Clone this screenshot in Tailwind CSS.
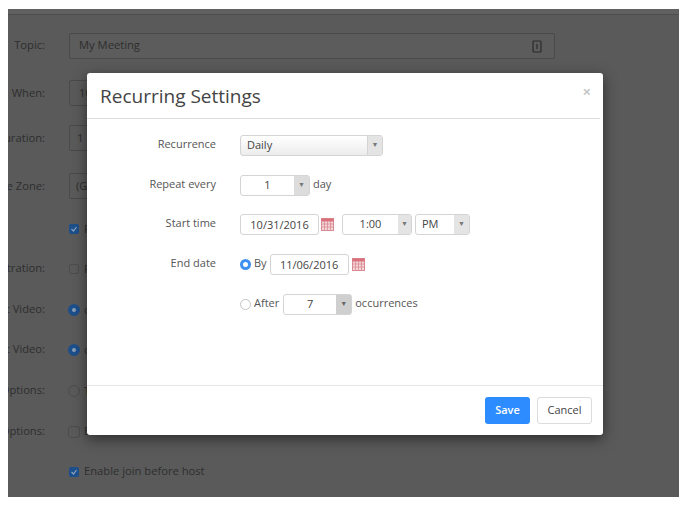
<!DOCTYPE html>
<html lang="en">
  <head>
    <meta charset="UTF-8" />
    <title>Recurring Settings</title>
    <script src="https://cdn.jsdelivr.net/npm/@tailwindcss/browser@4"></script>
  </head>
  <body class="bg-white w-[685px] h-[508px] overflow-hidden font-['Open_Sans',sans-serif] relative">
    <!-- Dimmed page behind the dialog -->
    <div class="ml-2 mt-[9px] w-[671px] h-[488px] bg-[#5a5a5a] overflow-hidden text-[#2e2e2e] text-[11.2px]">
      <div class="h-1.5 border-b border-[#4e4e4e] bg-[#606060]"></div>
      <div class="mt-[18px] flex flex-col">
        <div class="h-[26px] flex items-center">
          <div class="w-[37px] flex justify-end whitespace-nowrap -mt-0.5">Topic:</div>
          <div class="ml-6 w-[486px] h-[26px] border border-[#4a4a4a] rounded-[2px] bg-[#5c5c5c] flex items-center justify-between pl-[9px] pr-3">
            <span class="-mt-0.5">My Meeting</span>
            <svg width="10" height="13" viewBox="0 0 10 13" fill="none" stroke="#2b2b2b" stroke-width="1.2"><rect x="1" y="1" width="8" height="11" rx="1"/><path d="M5 4v5"/></svg>
          </div>
        </div>
        <div class="mt-[21px] h-[26px] flex items-center">
          <div class="w-[37px] flex justify-end whitespace-nowrap">When:</div>
          <div class="ml-6 w-20 h-[26px] border border-[#4a4a4a] rounded-[2px] pl-[9px] leading-6">10/31/2016</div>
        </div>
        <div class="mt-[19px] h-[26px] flex items-center">
          <div class="w-[37px] flex justify-end whitespace-nowrap">Duration:</div>
          <div class="ml-6 w-20 h-[26px] border border-[#4a4a4a] rounded-[2px] pl-[7px] leading-6">1</div>
        </div>
        <div class="mt-[22px] h-[26px] flex items-center">
          <div class="w-[37px] flex justify-end whitespace-nowrap">Time Zone:</div>
          <div class="ml-6 w-20 h-[26px] border border-[#4a4a4a] rounded-[2px] pl-[6px] leading-6 whitespace-nowrap overflow-hidden">(GMT-7:00)</div>
        </div>
        <div class="mt-[21px] h-[18px] flex items-center">
          <div class="ml-[61px] w-2.5 h-2.5 rounded-[2px] bg-[#1d4f8a] flex items-center justify-center">
            <svg width="8" height="8" viewBox="0 0 8 8" fill="none" stroke="#8ca3bf" stroke-width="1.2"><path d="M1.5 4l2 2 3-4"/></svg>
          </div>
          <span class="ml-[5px]">Recurring</span>
        </div>
        <div class="mt-[22px] h-[18px] flex items-center">
          <div class="w-[37px] flex justify-end whitespace-nowrap -mt-0.5">Registration:</div>
          <div class="ml-6 w-2.5 h-2.5 rounded-[2px] border border-[#4c4c4c]"></div>
          <span class="ml-[5px]">Required</span>
        </div>
        <div class="mt-[23px] h-[18px] flex items-center">
          <div class="w-[37px] flex justify-end whitespace-nowrap -mt-0.5">Host Video:</div>
          <div class="ml-[23px] w-3 h-3 rounded-full border-4 border-[#1d4f8a] bg-[#8a9db5]"></div>
          <span class="ml-1">on</span>
        </div>
        <div class="mt-[22px] h-[18px] flex items-center">
          <div class="w-[37px] flex justify-end whitespace-nowrap -mt-0.5">Guest Video:</div>
          <div class="ml-[23px] w-3 h-3 rounded-full border-4 border-[#1d4f8a] bg-[#8a9db5]"></div>
          <span class="ml-1">on</span>
        </div>
        <div class="mt-[23px] h-[18px] flex items-center">
          <div class="w-[37px] flex justify-end whitespace-nowrap -mt-0.5">Audio Options:</div>
          <div class="ml-[23px] w-3 h-3 rounded-full border border-[#4c4c4c]"></div>
          <span class="ml-1">Telephone</span>
        </div>
        <div class="mt-[23px] h-[18px] flex items-center">
          <div class="w-[37px] flex justify-end whitespace-nowrap -mt-0.5">Meeting Options:</div>
          <div class="ml-[23px] w-3 h-3 rounded-[3px] border border-[#4c4c4c]"></div>
          <span class="ml-1 -mt-0.5">Enable</span>
        </div>
        <div class="mt-[22px] h-[18px] flex items-center">
          <div class="ml-[61px] w-2.5 h-2.5 rounded-[2px] bg-[#1d4f8a] flex items-center justify-center">
            <svg width="8" height="8" viewBox="0 0 8 8" fill="none" stroke="#8ca3bf" stroke-width="1.2"><path d="M1.5 4l2 2 3-4"/></svg>
          </div>
          <span class="ml-[5px] -mt-0.5">Enable join before host</span>
        </div>
      </div>
    </div>

    <!-- Dialog -->
    <div class="absolute left-[87px] top-[73px] w-[516px] h-[362px] bg-white rounded-[3px] shadow-[0_4px_14px_rgba(0,0,0,0.5)] flex flex-col text-[#555] text-[11px]">
      <div class="h-[46px] flex justify-between border-b border-[#dedede] mr-[3px] pl-[13px] pr-[9px]">
        <h2 class="text-[19px] leading-[46px] text-[#444]">Recurring Settings</h2>
        <span class="text-[15px] leading-[36px] font-bold text-[#c8c8c8]">×</span>
      </div>
      <div class="flex-1 pt-4 flex flex-col">
        <div class="flex items-center h-[21px]">
          <div class="w-[129px] text-right -mt-0.5">Recurrence</div>
          <div class="ml-6 w-[143px] h-[21px] border border-[#d4d4d4] rounded-[3px] flex justify-between items-center pl-1.5 bg-gradient-to-b from-white to-[#ececec]">
            <span class="text-[#444]">Daily</span>
            <span class="w-[15px] h-full bg-[#e4e4e4] border-l border-[#d4d4d4] text-[#777] text-[7px] flex items-center justify-center">▼</span>
          </div>
        </div>
        <div class="flex items-center h-[21px] mt-[19px]">
          <div class="w-[129px] text-right -mt-0.5">Repeat every</div>
          <div class="ml-6 w-[70px] h-[21px] border border-[#d4d4d4] rounded-[3px] flex justify-between items-center">
            <span class="flex-1 text-center text-[#444]">1</span>
            <span class="w-[15px] h-full bg-[#dcdcdc] text-[#777] text-[7px] flex items-center justify-center">▼</span>
          </div>
          <span class="ml-[3px] -mt-0.5">day</span>
        </div>
        <div class="flex items-center h-[21px] mt-[18px]">
          <div class="w-[129px] text-right -mt-0.5">Start time</div>
          <div class="ml-6 w-[79px] h-[21px] border border-[#d4d4d4] rounded-[3px] text-center text-[#444] leading-[19px]">10/31/2016</div>
          <svg class="ml-0.5" width="13" height="13" viewBox="0 0 13 13"><rect x="0.5" y="0.5" width="12" height="12" fill="#f3d5d8" stroke="#d98a92"/><rect x="0.5" y="0.5" width="12" height="3" fill="#d9707c"/><path d="M0 6h13M0 9h13M3.5 3v10M6.5 3v10M9.5 3v10" stroke="#d98a92" stroke-width="0.8"/></svg>
          <div class="ml-2 w-[70px] h-[21px] border border-[#d4d4d4] rounded-[3px] flex justify-between items-center">
            <span class="flex-1 text-center text-[#444]">1:00</span>
            <span class="w-[13px] h-full bg-[#e4e4e4] text-[#777] text-[7px] flex items-center justify-center">▼</span>
          </div>
          <div class="ml-[3px] w-[55px] h-[21px] border border-[#d4d4d4] rounded-[3px] flex justify-between items-center pl-1.5">
            <span class="text-[#444]">PM</span>
            <span class="w-[15px] h-full bg-[#e4e4e4] text-[#777] text-[7px] flex items-center justify-center">▼</span>
          </div>
        </div>
        <div class="flex items-center h-[21px] mt-[19px]">
          <div class="w-[129px] text-right -mt-0.5">End date</div>
          <div class="ml-6 w-[11px] h-[11px] rounded-full border-[3.5px] border-[#3d8ff0] bg-white shrink-0"></div>
          <span class="ml-[3px] -mt-0.5">By</span>
          <div class="ml-[3px] w-[79px] h-[21px] border border-[#d4d4d4] rounded-[3px] text-center text-[#444] leading-[19px]">11/06/2016</div>
          <svg class="ml-[3px]" width="13" height="13" viewBox="0 0 13 13"><rect x="0.5" y="0.5" width="12" height="12" fill="#f3d5d8" stroke="#d98a92"/><rect x="0.5" y="0.5" width="12" height="3" fill="#d9707c"/><path d="M0 6h13M0 9h13M3.5 3v10M6.5 3v10M9.5 3v10" stroke="#d98a92" stroke-width="0.8"/></svg>
        </div>
        <div class="flex items-center h-[21px] mt-[19px] pl-[153px]">
          <div class="w-[11px] h-[11px] rounded-full border border-[#c4c4c4]"></div>
          <span class="ml-[3px] -mt-0.5">After</span>
          <div class="ml-1 w-[69px] h-[21px] border border-[#d4d4d4] rounded-[3px] flex justify-between items-center">
            <span class="flex-1 text-center text-[#444]">7</span>
            <span class="w-[15px] h-full bg-[#cfcfcf] text-[#666] text-[7px] flex items-center justify-center">▼</span>
          </div>
          <span class="ml-[3px] -mt-0.5">occurrences</span>
        </div>
      </div>
      <div class="h-[50px] border-t border-[#e6e6e6] flex justify-end items-center gap-[7px] pr-[11px]">
        <button class="w-[45px] h-[27px] bg-[#2d8cff] text-white font-semibold rounded-[3px]">Save</button>
        <button class="w-[55px] h-[27px] bg-white border border-[#dcdcdc] rounded-[3px] text-[#444]">Cancel</button>
      </div>
    </div>
  </body>
</html>
